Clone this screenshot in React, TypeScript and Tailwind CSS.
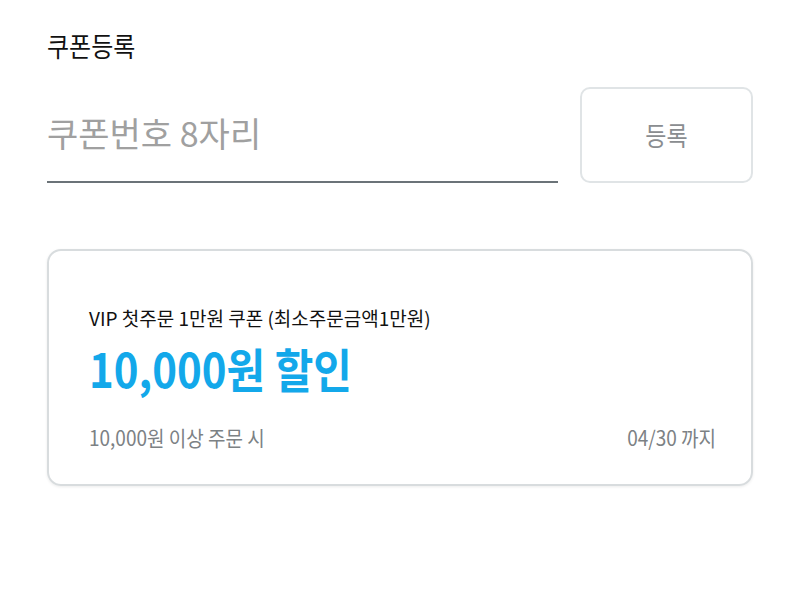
export default function App() {
  return (
    <div
      className="w-[800px] h-[599px] bg-white px-[47px] pt-[28px]"
      style={{ fontFamily: '"Noto Sans CJK KR", "Noto Sans", sans-serif' }}
    >
      {/* Header */}
      <h2 className="text-[24px] leading-[36px] text-[#111] font-normal scale-y-[1.12] origin-center">쿠폰등록</h2>

      {/* Input row */}
      <div className="mt-[23px] flex items-stretch gap-[22px]">
        <div className="flex-1 border-b-2 border-[#6b7378] h-[96px] flex items-center">
          <input
            className="w-full text-[34px] text-[#222] placeholder:text-[#a0a0a0] outline-none bg-transparent pb-[4px]"
            placeholder="쿠폰번호 8자리"
          />
        </div>
        <button className="w-[173px] h-[96px] rounded-[10px] border-2 border-[#e0e4e6] text-[23px] text-[#8a8d90] bg-white">
          <span className="inline-block scale-y-[1.15]">등록</span>
        </button>
      </div>

      {/* Coupon card */}
      <div className="mt-[66px] h-[237px] rounded-[14px] border-2 border-[#d8dcde] shadow-[0_1px_3px_rgba(0,0,0,0.08)] pl-[40px] pr-[35px] pt-[55px]">
        <p className="text-[19px] leading-[24px] text-[#111]">VIP 첫주문 1만원 쿠폰 (최소주문금액1만원)</p>
        <p className="mt-[16px] text-[42px] leading-[44px] font-bold text-[#13a8ea] scale-y-[1.12] origin-left">10,000원 할인</p>
        <div className="mt-[34px] flex justify-between text-[19px] leading-[26px] text-[#7c8184] scale-y-[1.1]">
          <span>10,000원 이상 주문 시</span>
          <span>04/30 까지</span>
        </div>
      </div>
    </div>
  )
}
